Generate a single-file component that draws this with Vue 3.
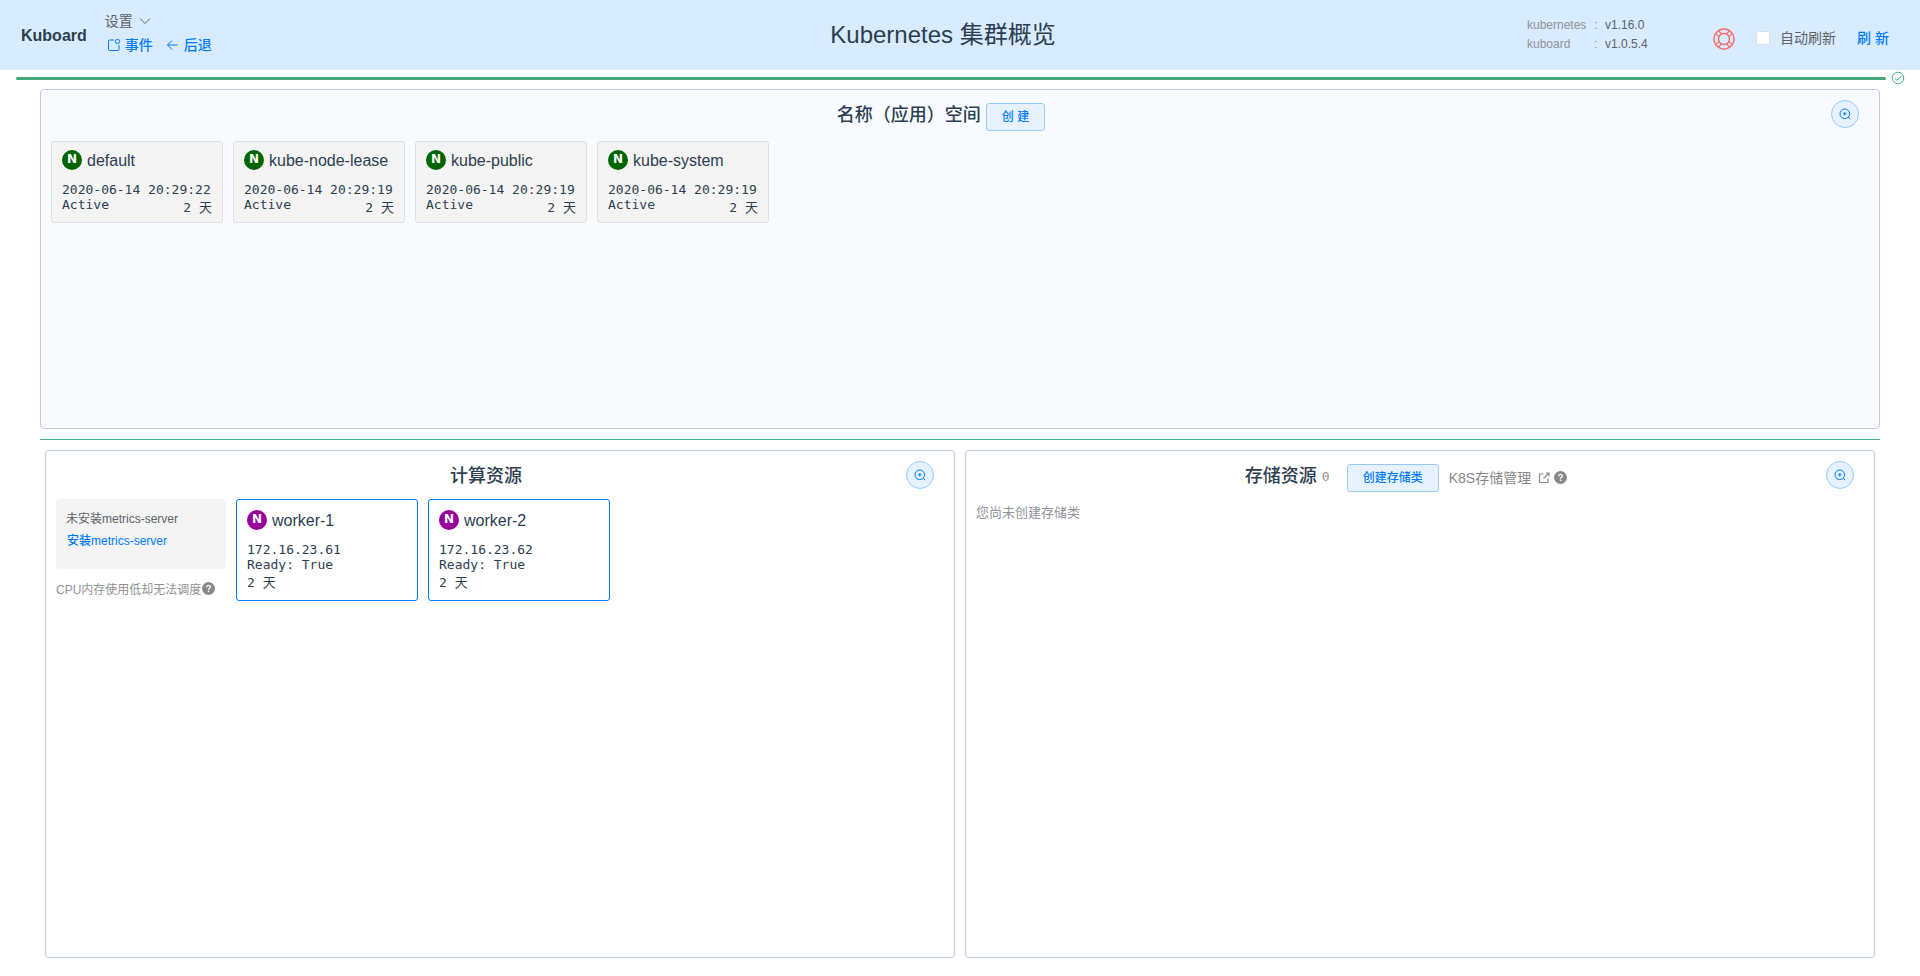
<script setup>
const namespaces = [
  { name: 'default', time: '2020-06-14 20:29:22', age: '2 天' },
  { name: 'kube-node-lease', time: '2020-06-14 20:29:19', age: '2 天' },
  { name: 'kube-public', time: '2020-06-14 20:29:19', age: '2 天' },
  { name: 'kube-system', time: '2020-06-14 20:29:19', age: '2 天' },
]
const workers = [
  { name: 'worker-1', ip: '172.16.23.61', age: '2 天' },
  { name: 'worker-2', ip: '172.16.23.62', age: '2 天' },
]
</script>

<template>
  <div class="page">
    <svg width="0" height="0" class="defs" aria-hidden="true">
      <symbol id="zoom-in" viewBox="0 0 12 12">
        <g fill="none" stroke="currentColor" stroke-width="1">
          <circle cx="5.800" cy="5.800" r="4.800" />
          <path d="M5.800 4v3.600M4 5.800h3.600M9.200 9.200l2 2" />
        </g>
      </symbol>
      <symbol id="question" viewBox="0 0 12 12">
        <circle cx="6" cy="6" r="6" fill="currentColor" />
        <path d="M4.300 4.800c0-2.200 3.400-2.100 3.400-.2 0 1.100-1.700 1.200-1.700 2.500" fill="none" stroke="#fff" stroke-width="1.200" />
        <rect x="5.400" y="8" width="1.300" height="1.300" fill="#fff" />
      </symbol>
    </svg>

    <header class="header">
      <div class="brand-area">
        <span class="brand">Kuboard</span>
        <nav class="menu">
          <button class="settings" type="button">
            设置
            <svg width="12" height="12" viewBox="0 0 12 12"><path d="M1 3.500l5 5 5-5" fill="none" stroke="currentColor" /></svg>
          </button>
          <div class="links">
            <a href="#events">
              <svg width="14" height="14" viewBox="0 0 14 14" fill="none" stroke="currentColor">
                <path d="M7 2H2.500Q1.500 2 1.500 3v8.500q0 1 1 1h8.500q1 0 1-1V7" />
                <circle cx="10.500" cy="3.500" r="2.200" />
              </svg>
              事件
            </a>
            <a href="#back">
              <svg width="14" height="14" viewBox="0 0 14 14" fill="none" stroke="currentColor">
                <path d="M11.500 7H1.500M6 2.500L1.500 7l4.500 4.500" />
              </svg>
              后退
            </a>
          </div>
        </nav>
      </div>
      <h1 class="title">Kubernetes 集群概览</h1>
      <div class="tools">
        <dl class="versions">
          <dt>kubernetes</dt><dd class="colon">:</dd><dd>v1.16.0</dd>
          <dt>kuboard</dt><dd class="colon">:</dd><dd>v1.0.5.4</dd>
        </dl>
        <svg class="ring" width="22" height="22" viewBox="0 0 22 22" fill="none" stroke="#f56c6c" stroke-width="1.400">
          <circle cx="11" cy="11" r="10" />
          <circle cx="11" cy="11" r="5.500" />
          <path d="M2.800 5.400l3.200 3.200M5.400 2.800l3.200 3.200M19.200 5.400l-3.200 3.200M16.600 2.800l-3.200 3.200M2.800 16.600l3.200-3.200M5.400 19.200l3.200-3.200M19.200 16.600l-3.200-3.200M16.600 19.200l-3.200-3.200" stroke-width="1.200" />
        </svg>
        <label class="auto"><input type="checkbox" /><span>自动刷新</span></label>
        <button class="refresh" type="button">刷 新</button>
      </div>
    </header>

    <div class="progress">
      <div class="bar"></div>
      <svg width="14" height="14" viewBox="0 0 14 14" fill="none" stroke="#42b983">
        <circle cx="7" cy="7" r="5.800" />
        <path d="M4 7.200l2.200 2.300 4.200-4.500" />
      </svg>
    </div>

    <main class="content">
      <section class="panel namespaces">
        <div class="panel-head">
          <div class="heading">
            <h2>名称（应用）空间</h2>
            <button class="btn create" type="button">创 建</button>
          </div>
          <button class="zoom" type="button" aria-label="放大"><svg width="12" height="12"><use href="#zoom-in" /></svg></button>
        </div>
        <div class="cards">
          <article v-for="n in namespaces" :key="n.name" class="card ns">
            <div class="name"><span class="dot green">N</span><span class="label">{{ n.name }}</span></div>
            <div class="mono">{{ n.time }}</div>
            <div class="mono status"><span>Active</span><span class="age">{{ n.age }}</span></div>
          </article>
        </div>
      </section>

      <hr class="rule" />

      <div class="bottom">
        <section class="panel">
          <div class="panel-head">
            <div class="heading"><h2>计算资源</h2></div>
            <button class="zoom" type="button" aria-label="放大"><svg width="12" height="12"><use href="#zoom-in" /></svg></button>
          </div>
          <div class="cards">
            <div class="metrics">
              <div class="metrics-box">
                <div>未安装metrics-server</div>
                <a href="#metrics-server">安装metrics-server</a>
              </div>
              <div class="hint">CPU内存使用低却无法调度<svg width="13" height="13"><use href="#question" /></svg></div>
            </div>
            <article v-for="w in workers" :key="w.name" class="card worker">
              <div class="name"><span class="dot purple">N</span><span class="label">{{ w.name }}</span></div>
              <div class="mono">{{ w.ip }}</div>
              <div class="mono">Ready: True</div>
              <div class="mono age">{{ w.age }}</div>
            </article>
          </div>
        </section>

        <section class="panel">
          <div class="panel-head">
            <div class="heading">
              <h2>存储资源</h2>
              <span class="count">0</span>
              <button class="btn" type="button">创建存储类</button>
              <a class="manage" href="#storage">
                K8S存储管理
                <svg width="12" height="12" viewBox="0 0 12 12" fill="none" stroke="currentColor" stroke-width="1.200">
                  <path d="M5.500 2H1.500v8.500h8.500V6.500M7.500 1h3.500v3.500M11 1L5.500 6.500" />
                </svg>
              </a>
              <svg class="help" width="13" height="13"><use href="#question" /></svg>
            </div>
            <button class="zoom" type="button" aria-label="放大"><svg width="12" height="12"><use href="#zoom-in" /></svg></button>
          </div>
          <p class="empty">您尚未创建存储类</p>
        </section>
      </div>
    </main>
  </div>
</template>

<style>
body {
  margin: 0;
  background: #fff;
}
</style>

<style scoped>
.page {
  min-height: 100vh;
  box-sizing: border-box;
  display: flex;
  flex-direction: column;
  font-family: "Liberation Sans", "Noto Sans CJK SC", sans-serif;
  color: #2c3e50;
  font-size: 14px;
}
.page * {
  box-sizing: border-box;
}
.defs {
  position: absolute;
}
button {
  font-family: inherit;
  cursor: pointer;
}
svg {
  flex: none;
}
a {
  color: #007bff;
  text-decoration: none;
}
.header {
  height: 70px;
  background: #d9ebff;
  display: flex;
}
.brand-area {
  width: 359px;
  padding-left: 21px;
  display: flex;
  align-items: center;
  gap: 18px;
}
.brand {
  padding-top: 2px;
  font-size: 16px;
  font-weight: 700;
}
.menu {
  padding-bottom: 4px;
}
.settings {
  display: flex;
  align-items: center;
  gap: 6px;
  padding: 0;
  border: 0;
  background: none;
  color: #606266;
  font-size: 14px;
  line-height: 24px;
}
.links {
  display: flex;
  gap: 13px;
  padding-left: 2px;
  font-weight: 500;
  line-height: 24px;
}
.links a {
  display: flex;
  align-items: center;
  gap: 4px;
}
.title {
  flex: 1;
  margin: 0;
  text-align: center;
  font-size: 24px;
  font-weight: 400;
  line-height: 70px;
}
.tools {
  width: 393px;
  display: flex;
  align-items: center;
  padding-top: 8px;
}
.versions {
  width: 186px;
  margin: 0;
  padding-bottom: 8px;
  display: grid;
  grid-template-columns: 67px 11px auto;
  font-size: 12px;
  line-height: 19px;
  color: #909399;
}
.versions dd {
  margin: 0;
  color: #606266;
}
.versions .colon {
  color: #909399;
}
.auto {
  display: flex;
  align-items: center;
  gap: 10px;
  margin-left: 21px;
  color: #606266;
}
.auto span,
.refresh {
  padding: 0 0 4px;
}
.auto input {
  appearance: none;
  width: 14px;
  height: 14px;
  margin: 0 0 2px;
  border: 1px solid #dcdfe6;
  border-radius: 2px;
  background: #fff;
}
.refresh {
  margin-left: 21px;
  border: 0;
  background: none;
  color: #007bff;
  font-size: 14px;
  font-weight: 500;
}
.progress {
  display: flex;
  align-items: center;
  gap: 5px;
  height: 17px;
  padding: 0 15px 0 16px;
}
.progress svg {
  margin-bottom: 2px;
}
.bar {
  flex: 1;
  height: 3px;
  border-radius: 2px;
  background: #42a97f;
}
.content {
  flex: 1;
  display: flex;
  flex-direction: column;
  padding: 2px 40px 18px;
}
.panel {
  border: 1px solid #bfcbe3;
  border-radius: 4px;
  padding: 10px;
  background: #fff;
}
.namespaces {
  min-height: 340px;
  background: #f7fbff;
}
.panel-head {
  display: flex;
  align-items: flex-start;
  padding-right: 10px;
}
.bottom .panel-head {
  padding-left: 10px;
}
.heading {
  flex: 1;
  display: flex;
  align-items: flex-start;
  justify-content: center;
}
h2 {
  margin: 0;
  font-size: 18px;
  font-weight: 500;
  line-height: 30px;
}
.btn {
  height: 28px;
  margin-top: 3px;
  padding: 0 15px;
  border: 1px solid #99caff;
  border-radius: 3px;
  background: #e6f2ff;
  color: #007bff;
  font-size: 12px;
  font-weight: 500;
  line-height: 24px;
}
.create {
  margin-left: 5px;
}
.zoom {
  width: 28px;
  height: 28px;
  padding: 0;
  display: flex;
  align-items: center;
  justify-content: center;
  border: 1px solid #99caff;
  border-radius: 50%;
  background: #e6f2ff;
  color: #007bff;
}
.cards {
  display: flex;
  gap: 10px;
  align-items: flex-start;
  margin-top: 10px;
}
.bottom .cards {
  margin-top: 8px;
}
.card {
  border-radius: 3px;
  padding: 8px 10px;
}
.ns {
  width: 172px;
  height: 82px;
  border: 1px solid #dcdfe6;
  background: #f4f4f4;
}
.worker {
  width: 182px;
  height: 102px;
  padding-top: 10px;
  border: 1px solid #007bff;
  background: #fff;
}
.name {
  display: flex;
  align-items: center;
  gap: 5px;
  height: 20px;
  margin-bottom: 12px;
  font-size: 16px;
  white-space: nowrap;
}
.label {
  padding-top: 2px;
}
.dot {
  width: 20px;
  height: 20px;
  border-radius: 50%;
  color: #fff;
  font-family: "DejaVu Sans", sans-serif;
  font-size: 12px;
  font-weight: 700;
  line-height: 19px;
  text-align: center;
}
.green {
  background: #006400;
}
.purple {
  background: #990099;
}
.mono,
.count {
  font-family: "DejaVu Sans Mono", "Noto Sans CJK SC", monospace;
  font-size: 13px;
  line-height: 15px;
  white-space: nowrap;
}
.status {
  display: flex;
  justify-content: space-between;
}
.age {
  line-height: 21px;
}
.rule {
  width: 100%;
  height: 1px;
  margin: 10px 0;
  border: 0;
  background: #42a97f;
}
.bottom {
  flex: 1;
  display: grid;
  grid-template-columns: 1fr 1fr;
  gap: 10px;
  padding: 0 5px;
}
.metrics {
  width: 170px;
  font-size: 12px;
}
.metrics-box {
  height: 70px;
  padding: 9px 10px;
  border-radius: 4px;
  background: #f4f4f4;
  color: #606266;
  line-height: 22px;
}
.metrics-box a {
  padding-left: 1px;
  font-weight: 500;
}
.hint {
  display: flex;
  align-items: center;
  gap: 1px;
  margin-top: 10px;
  line-height: 22px;
  color: #909090;
  white-space: nowrap;
}
.hint svg {
  margin-bottom: 4px;
  color: #888;
}
.count {
  margin: 8px 17px 0 5px;
  color: #909399;
}
.manage {
  display: flex;
  align-items: center;
  gap: 7px;
  margin: 3px 4px 0 10px;
  color: #888;
  line-height: 28px;
}
.help {
  margin-top: 10px;
  color: #888;
}
.empty {
  margin: 11px 0 0;
  font-size: 13px;
  line-height: 20px;
  color: #909399;
}
</style>
